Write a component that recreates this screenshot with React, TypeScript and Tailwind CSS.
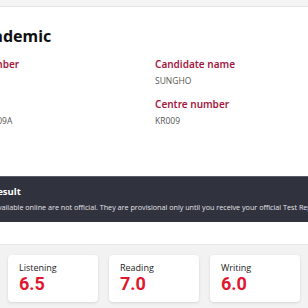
import React from 'react';

const details = [
  [
    { label: 'Candidate number', value: '003541' },
    { label: 'Test date', value: '1KR003541KIMS009A' },
  ],
  [
    { label: 'Candidate name', value: 'SUNGHO' },
    { label: 'Centre number', value: 'KR009' },
  ],
];

const scores = [
  { name: 'Listening', band: '6.5' },
  { name: 'Reading', band: '7.0' },
  { name: 'Writing', band: '6.0' },
];

export default function App() {
  return (
    <div
      className="w-[308px] h-[308px] overflow-hidden bg-white"
      style={{ fontFamily: '"Open Sans", "Noto Sans", sans-serif' }}
    >
      {/* top bar */}
      <div className="h-[7px] bg-[#f4f4f4] border-b border-[#e4e4e4]" />

      {/* candidate details */}
      <div className="ml-[-72px] pt-[19px] whitespace-nowrap">
        <h1 className="text-[16px] leading-[20px] font-bold text-[#111] font-['Noto_Sans',sans-serif]">
          IELTS Academic
        </h1>
        <div className="grid grid-cols-[227px_1fr] mt-[12px]">
          {details.map((col, i) => (
            <div key={i} className="flex flex-col gap-[11px]">
              {col.map((d) => (
                <div key={d.label} className="flex flex-col gap-[4px]">
                  <div className="text-[10px] leading-[13px] font-semibold text-[#a3193f] font-['Noto_Sans',sans-serif]">
                    {d.label}
                  </div>
                  <div className="text-[8.5px] leading-[12px] text-[#555]">{d.value}</div>
                </div>
              ))}
            </div>
          ))}
        </div>
      </div>

      {/* provisional banner */}
      <div className="mt-[49px] h-[46px] bg-[#30323e] border-t border-[#5a5c66] whitespace-nowrap">
        <div className="ml-[-32px] pt-[9px]">
          <div className="text-[9.5px] leading-[12px] font-bold text-white">Your result</div>
          <div className="mt-[4px] text-[7.2px] leading-[11px] text-[#e4e4e8]">
            Results available online are not official. They are provisional only until you receive your official Test Report Form.
          </div>
        </div>
      </div>

      {/* scores */}
      <div className="mt-[22px] h-[100px] bg-[#f2f2f2] border-t border-[#e8e8e8] px-[8px] pt-[10px]">
        <div className="grid grid-cols-3 gap-[11px]">
          {scores.map((s) => (
            <div
              key={s.name}
              className="h-[47px] bg-white rounded-[4px] shadow-[0_1px_3px_rgba(0,0,0,0.12)] px-[11px] pt-[7px]"
            >
              <div className="text-[9px] leading-[12px] text-[#222]">{s.name}</div>
              <div className="-mt-[1px] text-[18px] leading-[22px] font-bold text-[#e0182f] font-['Roboto',sans-serif]">
                {s.band}
              </div>
            </div>
          ))}
        </div>
      </div>
    </div>
  );
}
